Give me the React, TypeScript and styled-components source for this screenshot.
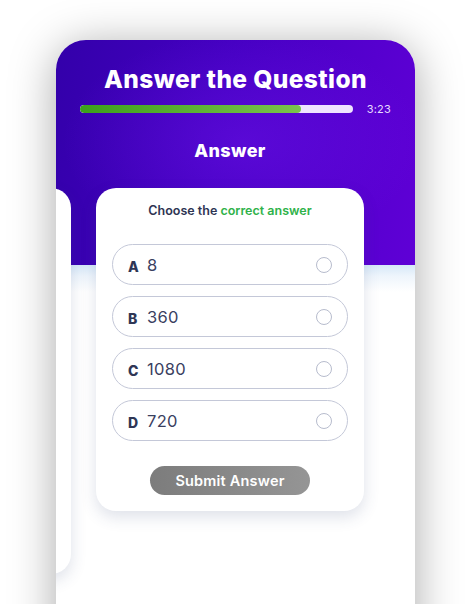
import React from "react";
import styled, { createGlobalStyle } from "styled-components";

const Global = createGlobalStyle`
  html, body { margin: 0; padding: 0; background: #ffffff; overflow: hidden; }
  body { font-family: "Inter", "Noto Sans", sans-serif; }
  * { box-sizing: border-box; }
`;

const Stage = styled.div`
  width: 474px;
  height: 604px;
  padding: 40px 59px 0 56px;
  overflow: hidden;
`;

const Phone = styled.div`
  width: 359px;
  height: 620px;
  border-radius: 30px 30px 0 0;
  overflow: hidden;
  box-shadow: 0 6px 46px rgba(0, 0, 0, 0.34);
  background:
    radial-gradient(ellipse 180px 110px at 52% 45%, rgba(110, 20, 235, 0.45), rgba(110, 20, 235, 0) 100%) top / 100% 225px no-repeat,
    linear-gradient(100deg, #3300aa 0%, #4500c2 45%, #5f00d6 100%) top / 100% 225px no-repeat,
    linear-gradient(180deg, #d6e8f8 225px, #eef5fc 236px, #ffffff 252px);
  display: flex;
  flex-direction: column;
`;

const Title = styled.h1`
  margin: 23px 0 0;
  text-align: center;
  color: #ffffff;
  font-family: "Inter", sans-serif;
  font-weight: 800;
  font-size: 24.5px;
  line-height: 32px;
  letter-spacing: 0.4px;
`;

const ProgressRow = styled.div`
  display: flex;
  align-items: center;
  gap: 14px;
  padding: 0 24px;
  margin-top: 6px;
  height: 16px;
`;

const Track = styled.div`
  flex: 1;
  height: 8px;
  border-radius: 4px;
  background: #efe4ff;
  overflow: hidden;
`;

const Fill = styled.div`
  height: 100%;
  border-radius: 4px;
  background: linear-gradient(90deg, #3c9f1c, #7bc34c);
`;

const Time = styled.span`
  color: #e6dcff;
  font-size: 11px;
  font-family: "Inter", sans-serif;
  letter-spacing: 0.2px;
`;

const Carousel = styled.div`
  display: flex;
  gap: 25px;
  padding-left: 40px;
  margin-top: 23px;
  align-items: flex-start;
`;

const Slide = styled.div<{ $offscreen?: boolean }>`
  flex: 0 0 268px;
  display: flex;
  flex-direction: column;
  align-items: center;
  gap: 26px;
  margin-left: ${(p) => (p.$offscreen ? "-293px" : "0")};
`;

const SlideLabel = styled.div`
  color: #ffffff;
  font-weight: 800;
  font-size: 18px;
  line-height: 22px;
  letter-spacing: 0.4px;
  height: 22px;
`;

const Card = styled.div<{ $tall?: boolean }>`
  width: 268px;
  min-height: ${(p) => (p.$tall ? "386px" : "0")};
  background: #ffffff;
  border-radius: 20px;
  box-shadow: 0 6px 16px rgba(50, 70, 120, 0.16);
  padding: 15px 16px 16px;
  display: flex;
  flex-direction: column;
  align-items: stretch;
`;

const Prompt = styled.p`
  margin: 0;
  text-align: center;
  font-size: 12.5px;
  line-height: 16px;
  font-weight: 600;
  color: #2e3553;
`;

const Accent = styled.span`
  color: #2fb24a;
`;

const Options = styled.div`
  display: flex;
  flex-direction: column;
  gap: 11px;
  margin-top: 25px;
`;

const Option = styled.label`
  height: 41px;
  border: 1px solid #c4c8d8;
  border-radius: 21px;
  display: flex;
  align-items: center;
  padding: 0 15px 0 15px;
  cursor: pointer;
`;

const Letter = styled.span`
  font-weight: 800;
  font-size: 14px;
  color: #2f3655;
  width: 19px;
  margin-top: 3px;
`;

const Value = styled.span`
  flex: 1;
  font-size: 16.5px;
  color: #3a405f;
  letter-spacing: 0.3px;
`;

const Radio = styled.span`
  width: 16px;
  height: 16px;
  border-radius: 50%;
  border: 1.3px solid #b7bccd;
`;

const Submit = styled.button`
  align-self: center;
  margin-top: 25px;
  width: 160px;
  height: 29px;
  border: none;
  border-radius: 15px;
  background: linear-gradient(90deg, #7c7c7c, #959595);
  color: #ffffff;
  font-family: "Inter", sans-serif;
  font-weight: 600;
  font-size: 14.5px;
  letter-spacing: 0.2px;
  cursor: pointer;
`;

const options = [
  { letter: "A", value: "8" },
  { letter: "B", value: "360" },
  { letter: "C", value: "1080" },
  { letter: "D", value: "720" },
];

export default function App() {
  const progress = 81;
  return (
    <>
      <Global />
      <Stage>
        <Phone>
          <Title>Answer the Question</Title>
          <ProgressRow>
            <Track>
              <Fill style={{ width: `${progress}%` }} />
            </Track>
            <Time>3:23</Time>
          </ProgressRow>
          <Carousel>
            <Slide $offscreen>
              <SlideLabel />
              <Card $tall />
            </Slide>
            <Slide>
              <SlideLabel>Answer</SlideLabel>
              <Card>
                <Prompt>
                  Choose the <Accent>correct answer</Accent>
                </Prompt>
                <Options>
                  {options.map((o) => (
                    <Option key={o.letter}>
                      <Letter>{o.letter}</Letter>
                      <Value>{o.value}</Value>
                      <Radio />
                    </Option>
                  ))}
                </Options>
                <Submit>Submit Answer</Submit>
              </Card>
            </Slide>
          </Carousel>
        </Phone>
      </Stage>
    </>
  );
}
